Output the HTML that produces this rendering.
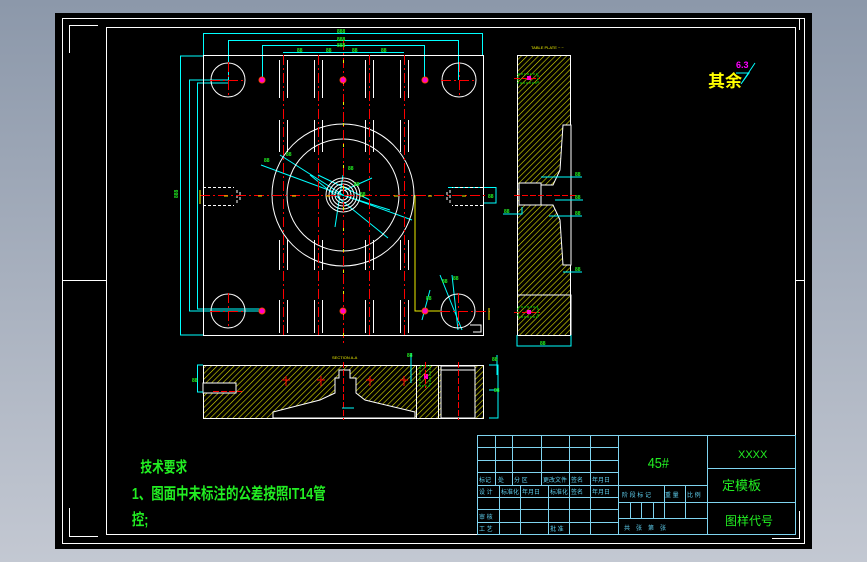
<!DOCTYPE html>
<html><head><meta charset="utf-8"><style>
html,body{margin:0;padding:0;background:#8e9aab;}
body{width:867px;height:562px;overflow:hidden;position:relative;background:linear-gradient(180deg,#8c98aa,#c3c8d2);}
svg{position:absolute;left:0;top:0;}
.g{fill:#22ee22;font-family:"Liberation Sans","Noto Sans CJK SC",sans-serif;}
.t{fill:#5fd0f0;font-family:"Liberation Sans","Noto Sans CJK SC",sans-serif;font-size:6px;}
</style></head><body>
<svg width="867" height="562" viewBox="0 0 867 562">
<defs>
<pattern id="h" width="4" height="4" patternUnits="userSpaceOnUse" patternTransform="rotate(45)">
<rect width="4" height="4" fill="#000"/><line x1="0" y1="0" x2="0" y2="4" stroke="#e0e000" stroke-width="1.2"/>
</pattern>
</defs>
<rect x="55" y="13" width="757" height="536" fill="#000"/>
<g stroke="#fff" fill="none" stroke-width="1">
<rect x="62.5" y="18.5" width="742" height="525"/>
<rect x="106.5" y="27.5" width="689" height="507"/>
<path d="M69.5 53V25.5H98M69.5 508V536.5H98M799.5 511V538.5H772M799.5 18V30M62 280.5H106M796 280.5H805"/>
</g>
<!-- main view -->
<g fill="none" stroke-width="1">
<g stroke="#0ff">
<path d="M203 33.5H483M203.5 33V55M482.5 33V55"/>
<path d="M228 40.5H459M228.5 40V80M458.5 40V80"/>
<path d="M262 45.5H425M262.5 45V80M424.5 45V80"/>
<path d="M283 52.5H404"/>
<path d="M180.5 56V335M180 56H203M180 335H203"/>
<path d="M189.5 80V311M189 80H228M189 311H262"/>
<path d="M197.5 83V309M197 83H228M197 309H262"/>
<path d="M448 187.5H496V203H483"/>
<path d="M261 165L342 195L390 210M280 155L343 195L412 220M310 175L388 238M343 175L335 227M345 190L372 178M318 175L370 200"/>
<path d="M440 275L462 330M452 275L458 330M430 290L422 320"/>
</g>
<rect x="203.5" y="55.5" width="280" height="280" stroke="#fff"/>
<g stroke="#fff">
<circle cx="343" cy="195" r="71"/>
<circle cx="343" cy="195" r="56"/>
<circle cx="343" cy="195" r="5"/><circle cx="343" cy="195" r="8"/><circle cx="343" cy="195" r="11"/><circle cx="343" cy="195" r="14"/><circle cx="343" cy="195" r="17"/>
<circle cx="228" cy="80" r="17"/><circle cx="459" cy="80" r="17"/><circle cx="228" cy="311" r="17"/><circle cx="458" cy="311" r="17"/>
<path d="M279.5 60V98M287.5 60V98M279.5 120V152M287.5 120V152M279.5 240V270M287.5 240V270M279.5 300V333M287.5 300V333
M314.5 60V98M322.5 60V98M314.5 120V152M322.5 120V152M314.5 240V270M322.5 240V270M314.5 300V333M322.5 300V333
M365.5 60V98M373.5 60V98M365.5 120V152M373.5 120V152M365.5 240V270M373.5 240V270M365.5 300V333M373.5 300V333
M400.5 60V98M408.5 60V98M400.5 120V152M408.5 120V152M400.5 240V270M408.5 240V270M400.5 300V333M408.5 300V333" />
<path d="M203 187.5H234M203 205.5H234M237 190V203M240 192V201M483 187.5H452M483 205.5H452M450 190V203M447 192V201" stroke-dasharray="3 2"/>
<path d="M470 325H481V332H473"/>
</g>
<g stroke="#f00" stroke-dasharray="10 3 2 3">
<path d="M200 195.5H488M283.5 55V338M318.5 55V338M343.5 40V345M369.5 55V338M404.5 55V338"/>
<path d="M210 80.5H246M228.5 62V98M441 80.5H477M459.5 62V98M210 311.5H246M228.5 293V329M440 311.5H490M458.5 293V329"/>
</g>
<path d="M343.5 60V340" stroke="#ee0" stroke-dasharray="3 18"/>
<path d="M200 196H470" stroke="#ee0" stroke-dasharray="4 30" stroke-dashoffset="10"/>
<path d="M415 195V311H440M200 190V204M489 308V320" stroke="#ee0"/>
<g stroke="#f40" fill="#f0c">
<circle cx="262" cy="80" r="3"/><circle cx="343" cy="80" r="3"/><circle cx="425" cy="80" r="3"/>
<circle cx="262" cy="311" r="3"/><circle cx="343" cy="311" r="3"/><circle cx="425" cy="311" r="3"/>
</g>
</g>
<g class="g" font-size="5" font-weight="bold">
<text x="337" y="33">888</text><text x="337" y="41">888</text><text x="337" y="47">888</text>
<text x="297" y="52">88</text><text x="326" y="52">88</text><text x="352" y="52">88</text><text x="381" y="52">88</text>
<text x="174" y="198" transform="rotate(-90 176 196)">888</text>
<text x="264" y="162">88</text><text x="286" y="156">88</text><text x="348" y="170">88</text><text x="354" y="186">88</text><text x="360" y="196">88</text>
<text x="488" y="198">88</text><text x="426" y="300">88</text><text x="442" y="283">88</text><text x="453" y="280">88</text>
</g>
<!-- side view -->
<rect x="517.5" y="55.5" width="53" height="280" fill="url(#h)" stroke="#fff"/>
<path d="M563 125H571V265H563L560 220L553 205H540V185H553L560 170Z" fill="#000" stroke="#fff"/>
<path d="M519 183H541V205H519Z" fill="#000" stroke="#fff"/>
<path d="M517 295H571V335" fill="none" stroke="#fff"/>
<g stroke="#0ff" fill="none">
<path d="M541 177H582M555 200H583M549 216H582M563 272H582M517 335V346H571V335M503 214H522V207"/>
</g>
<g stroke="#f00" stroke-dasharray="6 2"><path d="M514 195.5H576M514 78.5H540M514 312.5H540"/></g>
<g stroke="#0c0" fill="none" stroke-dasharray="2 1"><rect x="518" y="74" width="20" height="9"/><rect x="518" y="307" width="20" height="10"/></g>
<rect x="527" y="76" width="4" height="4" fill="#f0c"/><rect x="527" y="310" width="4" height="4" fill="#f0c"/>
<g class="g" font-size="5" font-weight="bold"><text x="575" y="176">88</text><text x="575" y="199">88</text><text x="575" y="215">88</text><text x="575" y="271">88</text><text x="540" y="345">88</text><text x="504" y="213">88</text></g>
<text x="531" y="49" font-size="4" fill="#ee0" font-family="Liberation Sans,sans-serif">TABLE PLATE ~ ~</text>
<!-- section view -->
<rect x="203.5" y="365.5" width="280" height="53" fill="url(#h)" stroke="#fff"/>
<path d="M203 383H236V393H203Z" fill="#000" stroke="#fff"/>
<path d="M273 418V412L320 400L335 393V378H339V370H350V378H356V393L365 400L415 412V418Z" fill="#000" stroke="#fff"/>
<path d="M441 366H475V418H441Z" fill="#000" stroke="#fff"/>
<path d="M441 370H475M416.5 366V418M438.5 366V418" stroke="#fff" fill="none"/>
<rect x="420" y="366" width="10" height="20" fill="none" stroke="#0c0" stroke-dasharray="2 1"/>
<rect x="424" y="374" width="4" height="5" fill="#f0c"/>
<g stroke="#f00" stroke-dasharray="6 2"><path d="M213 391.5H242M343.5 362V420M458.5 362V420M425.5 362V388"/></g>
<g stroke="#f00"><path d="M282 380H290M286 376V386M317 380H325M321 376V386M366 380H374M370 376V386M400 380H408M404 376V386"/></g>
<g stroke="#0ff" fill="none"><path d="M197 365H203M197.5 365V392H203M411 353V383M489 365H498V418H489M489 390H499M497 355V375M342 408H354"/></g>
<g class="g" font-size="5" font-weight="bold"><text x="192" y="382">88</text><text x="407" y="357">88</text><text x="492" y="361">88</text><text x="494" y="392">88</text></g>
<text x="332" y="359" font-size="4" fill="#ee0" font-family="Liberation Sans,sans-serif">SECTION A-A</text>
<!-- roughness -->
<text x="708" y="87" font-size="17" font-weight="bold" fill="#ff0" font-family="Liberation Sans,Noto Sans CJK SC,sans-serif">其余</text>
<text x="736" y="68" font-size="9" font-weight="bold" fill="#f0f" font-family="Liberation Sans,sans-serif">6.3</text>
<path d="M736 73H749L741 84L755 63" stroke="#0ff" fill="none"/>
<!-- tech requirements -->
<g class="g" font-weight="bold" transform="scale(0.78 1)">
<text x="180" y="472" font-size="15">技术要求</text>
<text x="169" y="499" font-size="16">1、图面中未标注的公差按照IT14管</text>
<text x="169" y="525" font-size="16">控;</text>
</g>
<!-- title block -->
<g stroke="#7fd4f0" fill="none" stroke-width="1">
<rect x="477.5" y="435.5" width="318" height="99"/>
<path d="M477 447.5H618M477 460.5H618M477 472.5H618M477 485.5H707M477 497.5H618M477 509.5H618M477 522.5H618M618 502.5H707M618 518.5H707M707 468.5H795M707 502.5H795"/>
<path d="M495.5 435V485M512.5 435V485M541.5 435V485M569.5 435V534M590.5 435V534M618.5 435V534M707.5 435V534"/>
<path d="M499.5 485V534M520.5 485V534M548.5 485V534M664.5 485V518M685.5 485V518M630.5 502V518M641.5 502V518M653.5 502V518"/>
</g>
<g class="t">
<text x="479" y="482">标记</text><text x="498" y="482">处</text><text x="514" y="482">分 区</text><text x="543" y="482">更改文件</text><text x="571" y="482">签名</text><text x="592" y="482">年月日</text>
<text x="479" y="494">设 计</text><text x="501" y="494">标准化</text><text x="522" y="494">年月日</text><text x="550" y="494">标准化</text><text x="571" y="494">签名</text><text x="592" y="494">年月日</text>
<text x="479" y="519">审 核</text><text x="479" y="531">工 艺</text><text x="550" y="531">批 准</text>
<text x="622" y="497">阶 段 标 记</text><text x="665" y="497">重 量</text><text x="687" y="497">比 例</text>
<text x="624" y="530">共　张　第　张</text>
</g>
<g class="g">
<text x="648" y="468" font-size="15" transform="scale(0.85 1)" dx="114">45#</text>
<text x="738" y="458" font-size="11">XXXX</text>
<text x="722" y="490" font-size="13">定模板</text>
<text x="725" y="525" font-size="12">图样代号</text>
</g>
</svg>
</body></html>
